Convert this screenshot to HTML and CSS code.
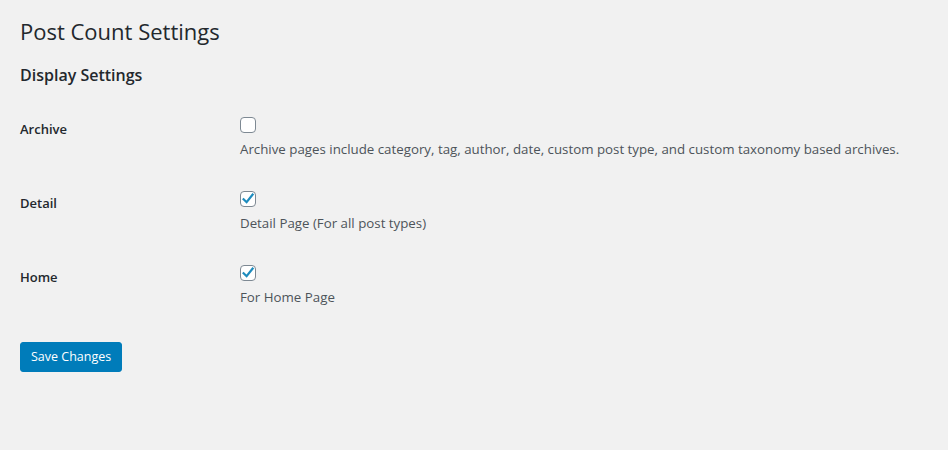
FILE: index.html
```html
<!DOCTYPE html>
<html lang="en">
<head>
<meta charset="utf-8">
<title>Post Count Settings</title>
<link rel="stylesheet" href="styles.css">
</head>
<body>
<div class="wrap">
  <h1 class="title">Post Count Settings</h1>
  <h2 class="subtitle">Display Settings</h2>
  <div class="form-table">
    <div class="row">
      <div class="th">Archive</div>
      <div class="td">
        <span class="cb"></span>
        <p class="desc">Archive pages include category, tag, author, date, custom post type, and custom taxonomy based archives.</p>
      </div>
    </div>
    <div class="row">
      <div class="th">Detail</div>
      <div class="td">
        <span class="cb checked"><svg viewBox="0 0 16 16" width="16" height="16"><path d="M3.6 8.2 L6.6 11.2 L12.6 3.6" fill="none" stroke="#1e8cbe" stroke-width="2.2" stroke-linecap="square"/></svg></span>
        <p class="desc">Detail Page (For all post types)</p>
      </div>
    </div>
    <div class="row">
      <div class="th">Home</div>
      <div class="td">
        <span class="cb checked"><svg viewBox="0 0 16 16" width="16" height="16"><path d="M3.6 8.2 L6.6 11.2 L12.6 3.6" fill="none" stroke="#1e8cbe" stroke-width="2.2" stroke-linecap="square"/></svg></span>
        <p class="desc">For Home Page</p>
      </div>
    </div>
  </div>
  <button class="btn" type="button">Save Changes</button>
</div>
</body>
</html>
```
FILE: styles.css
```css
html, body {
  margin: 0;
  padding: 0;
  background: #f1f1f1;
}
body {
  font-family: "Open Sans", "Noto Sans", sans-serif;
  color: #23282d;
  font-size: 13px;
}
.wrap {
  padding: 16px 20px 0 20px;
}
.title {
  margin: 0;
  font-size: 22px;
  font-weight: 400;
  line-height: 30px;
  color: #23282d;
}
.subtitle {
  margin: 18px 0 0 0;
  font-size: 16px;
  font-weight: 600;
  line-height: 22px;
  color: #23282d;
}
.form-table {
  margin-top: 14px;
  display: flex;
  flex-direction: column;
}
.row {
  display: flex;
  height: 74px;
}
.th {
  width: 220px;
  flex: none;
  padding-top: 20px;
  font-size: 13px;
  font-weight: 600;
  line-height: 18px;
  color: #23282d;
}
.td {
  padding-top: 17px;
  display: flex;
  flex-direction: column;
  align-items: flex-start;
}
.cb {
  width: 16px;
  height: 16px;
  box-sizing: border-box;
  border: 1px solid #7e8993;
  border-radius: 4px;
  background: #fff;
  position: relative;
}
.cb svg {
  position: absolute;
  left: -1px;
  top: -1px;
}
.desc {
  margin: 7px 0 0 0;
  font-size: 13.3px;
  line-height: 18px;
  color: #4d545a;
}
.btn {
  margin-top: 20px;
  height: 30px;
  padding: 0 10px;
  background: #007cba;
  border: 1px solid #007cba;
  border-radius: 3px;
  color: #fff;
  font-family: "Open Sans", "Noto Sans", sans-serif;
  font-size: 12.5px;
  line-height: 28px;
  cursor: pointer;
}
```
